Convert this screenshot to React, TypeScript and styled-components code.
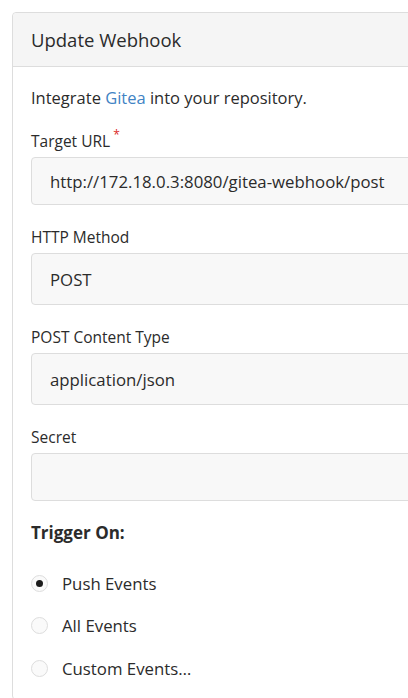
import styled, { createGlobalStyle } from 'styled-components';

const GlobalStyle = createGlobalStyle`
  html, body {
    margin: 0;
    padding: 0;
    background: #fff;
    overflow: hidden;
  }
  body {
    font-family: 'Open Sans', 'Noto Sans', sans-serif;
    color: #2b2b2b;
  }
`;

const events = [
  { label: 'Push Events', checked: true },
  { label: 'All Events', checked: false },
  { label: 'Custom Events…', checked: false },
];

export default function App() {
  return (
    <>
      <GlobalStyle />
      <Page>
        <Card>
          <Header>Update Webhook</Header>
          <Body>
            <Intro>
              Integrate <Link href='#'>Gitea</Link> into your repository.
            </Intro>
            <Field>
              <Label required>Target URL</Label>
              <Input>http://172.18.0.3:8080/gitea-webhook/post</Input>
            </Field>
            <Field>
              <Label>HTTP Method</Label>
              <Input select>POST</Input>
            </Field>
            <Field>
              <Label>POST Content Type</Label>
              <Input select>application/json</Input>
            </Field>
            <Field>
              <Label>Secret</Label>
              <Input />
            </Field>
            <TriggerTitle>Trigger On:</TriggerTitle>
            <RadioList>
              {events.map(e => (
                <RadioRow key={e.label}>
                  <Radio checked={e.checked} />
                  {e.label}
                </RadioRow>
              ))}
            </RadioList>
          </Body>
        </Card>
      </Page>
    </>
  );
}

const Page = styled.div`
  padding: 12px 0 0 12px;
  width: 580px;
`;

const Card = styled.div`
  border: 1px solid #ddd;
  border-radius: 4px;
  background: #fff;
`;

const Header = styled.div`
  background: #f5f5f5;
  border-bottom: 1px solid #ddd;
  border-radius: 4px 4px 0 0;
  height: 53px;
  display: flex;
  align-items: center;
  padding-left: 18px;
  font-size: 18.5px;
  color: #2b2b2b;
`;

const Body = styled.div`
  padding: 20px 18px;
`;

const Intro = styled.div`
  font-size: 16.5px;
  line-height: 22px;
  margin-bottom: 22px;
`;

const Link = styled.a`
  color: #4183c4;
  text-decoration: none;
`;

const Field = styled.div`
  display: flex;
  flex-direction: column;
  gap: 6px;
  margin-bottom: 22px;
`;

const Label = styled.div<{ required?: boolean }>`
  font-size: 15.5px;
  line-height: 20px;
  color: #2b2b2b;
  &::after {
    content: ${p => (p.required ? "'*'" : 'none')};
    color: #db2828;
    font-size: 12px;
    margin-left: 3px;
    vertical-align: top;
    position: relative;
    top: -6px;
  }
`;

const Input = styled.div<{ select?: boolean }>`
  height: ${p => (p.select ? 52 : 48)}px;
  box-sizing: border-box;
  border: 1px solid #ddd;
  border-radius: 4px;
  background: #f8f8f8;
  padding: 0 18px;
  display: flex;
  align-items: center;
  font-size: 16.8px;
  color: #2b2b2b;
`;

const TriggerTitle = styled.div`
  font-size: 17px;
  font-weight: 700;
  line-height: 20px;
`;

const RadioList = styled.div`
  display: flex;
  flex-direction: column;
  gap: 20.5px;
  margin-top: 29px;
`;

const RadioRow = styled.label`
  display: flex;
  align-items: center;
  gap: 14px;
  height: 22px;
  font-size: 16.8px;
  color: #2b2b2b;
`;

const Radio = styled.span<{ checked: boolean }>`
  width: 17px;
  height: 17px;
  box-sizing: border-box;
  border-radius: 50%;
  border: 1px solid #ddd;
  background: #fafafa;
  display: flex;
  align-items: center;
  justify-content: center;
  &::after {
    content: '';
    width: 7px;
    height: 7px;
    border-radius: 50%;
    background: ${p => (p.checked ? '#1b1b1b' : 'transparent')};
  }
`;
